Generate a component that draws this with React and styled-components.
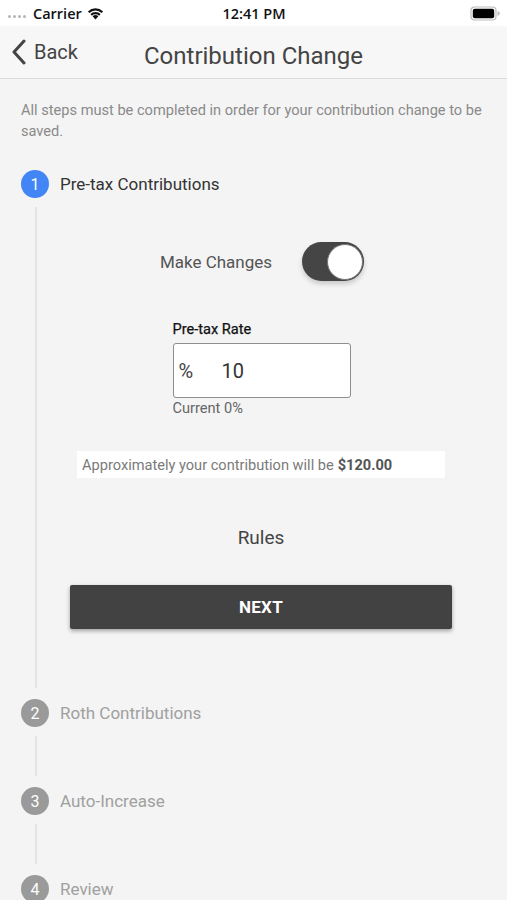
import React from "react";
import styled, { createGlobalStyle } from "styled-components";

const Global = createGlobalStyle`
  html, body { margin: 0; padding: 0; background: #f4f4f4; }
  body { font-family: Roboto, "Noto Sans", sans-serif; -webkit-font-smoothing: antialiased; }
  * { box-sizing: border-box; }
`;

const Screen = styled.div`
  width: 507px;
  height: 900px;
  overflow: hidden;
  background: #f4f4f4;
  display: flex;
  flex-direction: column;
  & > * { flex-shrink: 0; }
`;

const StatusBar = styled.div`
  height: 26px;
  background: #ffffff;
  display: grid;
  grid-template-columns: 1fr auto 1fr;
  align-items: center;
  padding: 0 7px 0 8px;
  font-family: "Open Sans", Roboto, sans-serif;
  font-weight: 600;
  font-size: 14.5px;
  color: #111;
`;

const StatusLeft = styled.div`
  display: flex;
  align-items: center;
  gap: 4px;
`;

const Dots = styled.span`
  display: flex;
  gap: 2px;
  margin-right: 3px;
  margin-top: 7px;
  & > i {
    width: 3px;
    height: 3px;
    border-radius: 50%;
    background: #b5b5b5;
  }
`;

const StatusRight = styled.div`
  display: flex;
  justify-content: flex-end;
  align-items: center;
`;

const NavBar = styled.div`
  height: 53px;
  background: #f7f7f7;
  border-bottom: 1px solid #dcdcdc;
  display: flex;
  align-items: center;
  position: relative;
  padding-left: 11px;
`;

const BackButton = styled.div`
  display: flex;
  align-items: center;
  gap: 7px;
  font-size: 20px;
  color: #444;
  z-index: 1;
`;

const Title = styled.div`
  position: absolute;
  left: 0;
  right: 0;
  text-align: center;
  font-size: 24px;
  color: #444;
  pointer-events: none;
  margin-top: 7px;
`;

const Body = styled.div`
  padding: 21px 21px 0 21px;
`;

const Intro = styled.p`
  margin: 0;
  font-size: 14.6px;
  line-height: 21px;
  color: #8a8a8a;
`;

const Stepper = styled.div`
  margin-top: 28px;
  display: flex;
  flex-direction: column;
`;

const StepHeader = styled.div`
  display: flex;
  align-items: center;
  gap: 11px;
  height: 28px;
`;

const StepCircle = styled.div`
  width: 28px;
  height: 28px;
  border-radius: 50%;
  background: ${(p) => (p.$active ? "#4285f4" : "#9a9a9a")};
  color: #fff;
  font-size: 16px;
  display: flex;
  align-items: center;
  justify-content: center;
  flex-shrink: 0;
`;

const StepLabel = styled.div`
  font-size: 17px;
  color: ${(p) => (p.$active ? "#333" : "#a0a0a0")};
`;

const StepBody = styled.div`
  margin: 9px 0 11px 14px;
  border-left: 2px solid #e3e3e3;
  min-height: ${(p) => p.$h || 40}px;
  padding: ${(p) => (p.$content ? "35px 34px 59px 33px" : "0")};
  display: flex;
  flex-direction: column;
  align-items: center;
`;

const ToggleRow = styled.div`
  display: flex;
  align-items: center;
  gap: 30px;
  margin-left: 2px;
`;

const ToggleLabel = styled.span`
  font-size: 17px;
  color: #555;
`;

const Toggle = styled.div`
  width: 62px;
  height: 39px;
  border-radius: 20px;
  background: #454545;
  box-shadow: 0 3px 5px rgba(0, 0, 0, 0.18);
  display: flex;
  align-items: center;
  justify-content: flex-end;
  padding-right: 1px;
`;

const Knob = styled.div`
  width: 36px;
  height: 36px;
  border-radius: 50%;
  background: #fff;
  border: 1.5px solid #777;
`;

const Field = styled.div`
  margin-top: 40px;
  width: 178px;
  display: flex;
  flex-direction: column;
  margin-left: 1px;
`;

const FieldLabel = styled.div`
  font-size: 14.6px;
  line-height: 17px;
  font-weight: 400;
  color: #111;
  -webkit-text-stroke: 0.25px #111;
`;

const InputBox = styled.div`
  margin-top: 5px;
  height: 55px;
  background: #fff;
  border: 1.5px solid #8e8e8e;
  border-radius: 3px;
  display: flex;
  align-items: center;
  padding-left: 5px;
  font-size: 20px;
  color: #333;
`;

const Unit = styled.span`
  width: 43px;
  color: #444;
`;

const Hint = styled.div`
  margin-top: 2px;
  font-size: 14.6px;
  line-height: 17px;
  color: #666;
`;

const Estimate = styled.div`
  margin-top: 34px;
  width: 368px;
  height: 27px;
  background: #fff;
  display: flex;
  align-items: center;
  padding-left: 5px;
  font-size: 14.6px;
  color: #7a7a7a;
  & b {
    color: #555;
    font-weight: 700;
    margin-left: 4px;
  }
`;

const Rules = styled.div`
  margin-top: 48px;
  font-size: 19px;
  line-height: 23px;
  color: #444;
`;

const NextButton = styled.div`
  margin-top: 36px;
  width: 382px;
  height: 44px;
  background: #424242;
  border-radius: 2px;
  box-shadow: 0 2px 4px rgba(0, 0, 0, 0.35);
  color: #fff;
  font-size: 17px;
  font-weight: 700;
  display: flex;
  align-items: center;
  justify-content: center;
  letter-spacing: 0.3px;
`;

const Wifi = () => (
  <svg width="19" height="14" viewBox="0 0 19 14">
    <path d="M9.5 13.5 L6.6 10.3 A4.2 4.2 0 0 1 12.4 10.3 Z" fill="#111" />
    <path d="M4.4 8.1 A7.3 7.3 0 0 1 14.6 8.1 L13.1 9.7 A5.2 5.2 0 0 0 5.9 9.7 Z" fill="#111" />
    <path d="M1.9 5.4 A10.9 10.9 0 0 1 17.1 5.4 L15.6 7 A8.7 8.7 0 0 0 3.4 7 Z" fill="#111" />
  </svg>
);

const Battery = () => (
  <svg width="30" height="15" viewBox="0 0 30 15">
    <rect x="1" y="1" width="25" height="13" rx="3.5" fill="none" stroke="#bbb" strokeWidth="1.2" />
    <rect x="2.8" y="2.8" width="21.4" height="9.4" rx="2" fill="#000" />
    <path d="M27.5 5.3 A2.2 2.2 0 0 1 27.5 9.7 Z" fill="#bbb" />
  </svg>
);

const Chevron = () => (
  <svg width="16" height="26" viewBox="0 0 16 26">
    <path d="M13 2 L3 13 L13 24" fill="none" stroke="#444" strokeWidth="3" strokeLinecap="round" strokeLinejoin="round" />
  </svg>
);

const steps = [
  { n: 2, label: "Roth Contributions" },
  { n: 3, label: "Auto-Increase" },
  { n: 4, label: "Review" },
];

export default function App() {
  return (
    <Screen>
      <Global />
      <StatusBar>
        <StatusLeft>
          <Dots>
            <i />
            <i />
            <i />
            <i />
          </Dots>
          <span>Carrier</span>
          <Wifi />
        </StatusLeft>
        <span>12:41 PM</span>
        <StatusRight>
          <Battery />
        </StatusRight>
      </StatusBar>
      <NavBar>
        <BackButton>
          <Chevron />
          <span>Back</span>
        </BackButton>
        <Title>Contribution Change</Title>
      </NavBar>
      <Body>
        <Intro>
          All steps must be completed in order for your contribution change to be saved.
        </Intro>
        <Stepper>
          <StepHeader>
            <StepCircle $active>1</StepCircle>
            <StepLabel $active>Pre-tax Contributions</StepLabel>
          </StepHeader>
          <StepBody $content>
            <ToggleRow>
              <ToggleLabel>Make Changes</ToggleLabel>
              <Toggle>
                <Knob />
              </Toggle>
            </ToggleRow>
            <Field>
              <FieldLabel>Pre-tax Rate</FieldLabel>
              <InputBox>
                <Unit>%</Unit>
                <span>10</span>
              </InputBox>
              <Hint>Current 0%</Hint>
            </Field>
            <Estimate>
              Approximately your contribution will be <b>$120.00</b>
            </Estimate>
            <Rules>Rules</Rules>
            <NextButton>NEXT</NextButton>
          </StepBody>
          {steps.map((s, i) => (
            <React.Fragment key={s.n}>
              <StepHeader>
                <StepCircle>{s.n}</StepCircle>
                <StepLabel>{s.label}</StepLabel>
              </StepHeader>
              {i < steps.length - 1 && <StepBody $h={40} />}
            </React.Fragment>
          ))}
        </Stepper>
      </Body>
    </Screen>
  );
}
